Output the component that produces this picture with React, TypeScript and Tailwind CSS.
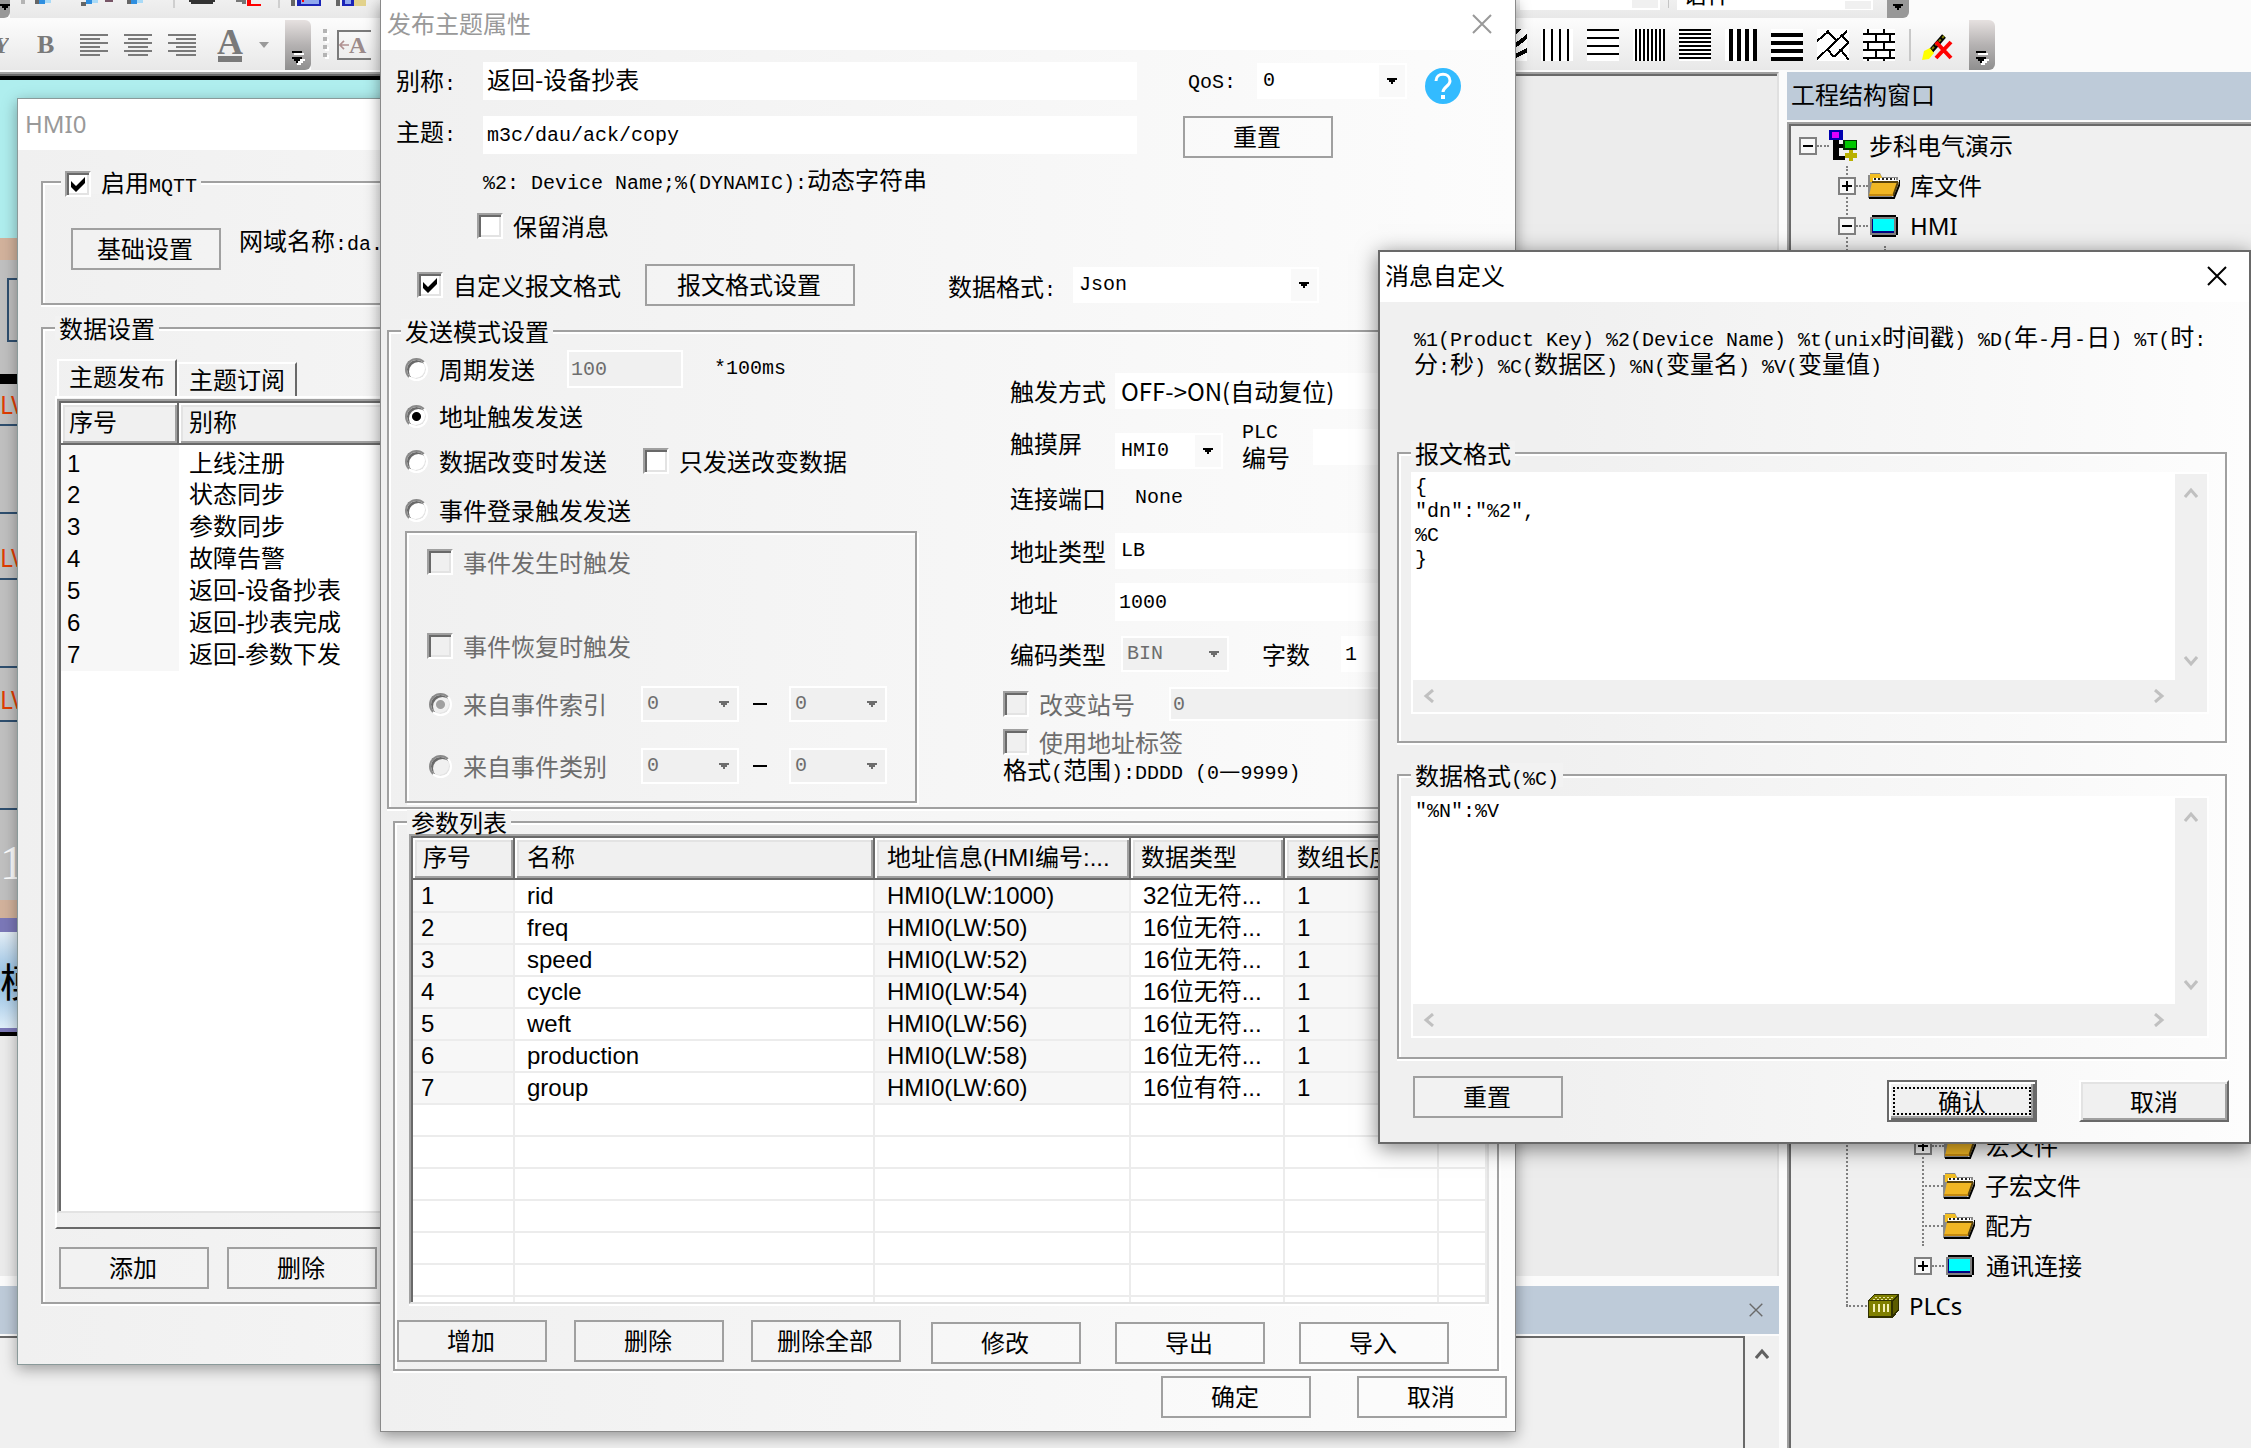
import { useState } from 'react';
import type { ReactNode } from 'react';

const PUBLISH_TOPICS = [
  '上线注册',
  '状态同步',
  '参数同步',
  '故障告警',
  '返回-设备抄表',
  '返回-抄表完成',
  '返回-参数下发',
];

const PARAMS = [
  { name: 'rid', address: 'HMI0(LW:1000)', type: '32位无符...', length: 1 },
  { name: 'freq', address: 'HMI0(LW:50)', type: '16位无符...', length: 1 },
  { name: 'speed', address: 'HMI0(LW:52)', type: '16位无符...', length: 1 },
  { name: 'cycle', address: 'HMI0(LW:54)', type: '16位无符...', length: 1 },
  { name: 'weft', address: 'HMI0(LW:56)', type: '16位无符...', length: 1 },
  { name: 'production', address: 'HMI0(LW:58)', type: '16位无符...', length: 1 },
  { name: 'group', address: 'HMI0(LW:60)', type: '16位有符...', length: 1 },
];

const EMPTY_ROWS = [0, 1, 2, 3, 4, 5, 6];

const monoFont = 'font-["Liberation_Mono","Noto_Sans_CJK_SC",monospace] text-[20px]';
const uiFont = 'font-["Noto_Sans","Noto_Sans_CJK_SC",sans-serif]';
const listFont = 'font-["Liberation_Sans","Noto_Sans_CJK_SC",sans-serif]';

// Latin runs are set in the fixed-width face, Chinese runs keep the full size
function Mix({ text }: { text: string }) {
  const parts = text.match(/[\u3400-\u9fff—]+|[^\u3400-\u9fff—]+/g) || [];
  return (
    <>
      {parts.map((part, i) =>
        /[\u3400-\u9fff—]/.test(part) ? (
          <span key={i}>{part}</span>
        ) : (
          <span key={i} className={`leading-none whitespace-pre-wrap ${monoFont}`}>{part}</span>
        )
      )}
    </>
  );
}

function Check({ label, defaultChecked, disabled }: { label: string; defaultChecked?: boolean; disabled?: boolean }) {
  return (
    <label className={`flex shrink-0 items-center gap-[10px] whitespace-nowrap ${disabled ? 'text-[#6d6d6d]' : ''}`}>
      <span className="relative block size-[26px]">
        <input
          type="checkbox"
          defaultChecked={defaultChecked}
          disabled={disabled}
          className="peer block size-[26px] appearance-none border-2 border-t-[#a0a0a0] border-l-[#a0a0a0] border-r-white border-b-white bg-white shadow-[inset_2px_2px_0_#696969,inset_-2px_-2px_0_#e3e3e3] disabled:bg-[#f0f0f0]"
        />
        <svg viewBox="0 0 26 26" className="pointer-events-none absolute inset-0 hidden peer-checked:block">
          <path d="M6 10v6l5 5 9-9V6l-9 9z" fill="#000" />
        </svg>
      </span>
      <span><Mix text={label} /></span>
    </label>
  );
}

function Radio({ label, name, defaultChecked, disabled }: { label: string; name: string; defaultChecked?: boolean; disabled?: boolean }) {
  return (
    <label className={`flex shrink-0 items-center gap-[11px] whitespace-nowrap ${disabled ? 'text-[#6d6d6d]' : ''}`}>
      <input
        type="radio"
        name={name}
        defaultChecked={defaultChecked}
        disabled={disabled}
        className="block size-[23px] appearance-none rounded-full border-2 border-t-[#8a8a8a] border-l-[#8a8a8a] border-r-white border-b-white bg-white shadow-[inset_2px_2px_0_#696969,inset_-1px_-1px_0_#e3e3e3] checked:bg-[radial-gradient(circle,#000_4px,#fff_5px)] disabled:bg-[#f0f0f0] disabled:checked:bg-[radial-gradient(circle,#a0a0a0_4px,#f0f0f0_5px)]"
      />
      <span>{label}</span>
    </label>
  );
}

function Button({ children, wide }: { children: ReactNode; wide?: boolean }) {
  return (
    <button
      type="button"
      className={`h-[42px] shrink-0 border-2 border-[#a0a0a0] bg-white/10 pr-[2px] pb-[3px] text-center active:bg-[#e5e5e5] ${wide ? 'w-[210px]' : 'w-[150px]'}`}
    >
      {children}
    </button>
  );
}

function Select({ label, value, className, disabled, plain }: { label: string; value: string; className: string; disabled?: boolean; plain?: boolean }) {
  return (
    <div className={`relative h-9 shrink-0 ${className}`}>
      <select
        aria-label={label}
        disabled={disabled}
        className={`size-full appearance-none border-2 border-white px-1 leading-7 opacity-100 ${plain ? '' : monoFont} ${disabled ? 'bg-[#f0f0f0] text-[#6d6d6d]' : 'bg-white'}`}
      >
        <option>{value}</option>
      </select>
      <span className={`pointer-events-none absolute inset-y-[2px] right-[2px] flex w-[26px] items-center justify-center ${disabled ? '' : 'bg-[#f9f9f9]'}`}>
        <svg viewBox="0 0 10 6" className="h-[6px] w-[10px]" shapeRendering="crispEdges">
          <path d="M0 0h10v2h-2v2h-2v2h-2v-2h-2v-2h-2z" fill={disabled ? '#6d6d6d' : '#000'} />
        </svg>
      </span>
    </div>
  );
}

function GroupBox({ legend, legendClass = 'ml-3', className, children }: { legend: ReactNode; legendClass?: string; className: string; children: ReactNode }) {
  return (
    <fieldset className={`min-w-0 border-2 border-[#a0a0a0] shadow-[inset_2px_2px_0_#fff,0_2px_0_#fff,2px_2px_0_#fff] ${className}`}>
      <legend className={`h-6 bg-[#f2f2f2] px-1 whitespace-nowrap ${legendClass}`}>{legend}</legend>
      {children}
    </fieldset>
  );
}

function CloseIcon({ className }: { className: string }) {
  return (
    <svg viewBox="0 0 20 20" className={className} fill="none" stroke="currentColor" strokeWidth="2">
      <path d="M1 1l18 18M19 1L1 19" />
    </svg>
  );
}

function Chevron({ className }: { className: string }) {
  return (
    <svg viewBox="0 0 14 12" className={`h-3 w-[14px] ${className}`} fill="none" stroke="currentColor" strokeWidth="3">
      <path d="M1 10l6-7 6 7" />
    </svg>
  );
}

/* ---------- toolbars ---------- */

function AlignIcon({ kind }: { kind: 'left' | 'center' | 'right' }) {
  const shift = kind === 'left' ? 0 : kind === 'center' ? 4 : 8;
  return (
    <svg viewBox="0 0 28 22" className="h-[22px] w-7" fill="#7a7a7a" shapeRendering="crispEdges">
      {[0, 8, 16].map((y) => (
        <rect key={y} x="0" y={y} width="28" height="2" />
      ))}
      {[4, 12, 20].map((y) => (
        <rect key={y} x={shift} y={y} width="20" height="2" />
      ))}
    </svg>
  );
}

function Overflow() {
  return (
    <button type="button" aria-label="工具栏选项" className="flex h-[50px] w-[26px] shrink-0 items-end justify-center rounded-r-md bg-linear-to-b from-[#e6e1e0] via-[#b5b2b2] to-[#8f8f8f] pb-[5px]">
      <svg viewBox="0 0 14 16" className="h-4 w-[14px]" shapeRendering="crispEdges">
        <path d="M3 4h10v2H3zM4 10h10v2h-2v2h-2v2H6v-2z" fill="#fff" />
        <path d="M1 2h10v2H1zM1 8h10v2H9v2H7v2H5v-2H3v-2H1z" fill="#000" />
      </svg>
    </button>
  );
}

function StubOverflow({ className }: { className: string }) {
  return (
    <span className={`flex h-[18px] shrink-0 items-start justify-center rounded-br-md bg-[#989898] pt-1 ${className}`}>
      <svg viewBox="0 0 10 6" className="h-[6px] w-[10px]" shapeRendering="crispEdges">
        <path d="M0 0h10v2h-2v2h-2v2h-2v-2h-2v-2h-2z" fill="#000" />
      </svg>
    </span>
  );
}

function Grip({ rows }: { rows: number[] }) {
  return (
    <svg viewBox="0 0 6 32" className="h-8 w-[6px]" shapeRendering="crispEdges">
      {rows.map((y) => (
        <g key={y}>
          <rect x="2" y={y + 2} width="4" height="4" fill="#fff" />
          <rect x="0" y={y} width="4" height="4" fill="#b4b4b4" />
        </g>
      ))}
    </svg>
  );
}

const PATTERNS = [
  <path key="p" d="M-2 12L12 0M-2 24L26 -2M-2 34L34 6M8 34L34 20" stroke="#000" strokeWidth="4" />,
  <path key="p" d="M3 0v32M11 0v32M19 0v32M27 0v32" stroke="#000" strokeWidth="2" />,
  <path key="p" d="M0 1h32M0 9h32M0 17h32M0 25h32" stroke="#000" strokeWidth="2" />,
  <path key="p" d="M3 0v32M7 0v32M11 0v32M15 0v32M19 0v32M23 0v32M27 0v32M31 0v32" stroke="#000" strokeWidth="2" />,
  <path key="p" d="M0 1h32M0 5h32M0 9h32M0 13h32M0 17h32M0 21h32M0 25h32M0 29h32" stroke="#000" strokeWidth="2" />,
  <path key="p" d="M6 0v32M14 0v32M22 0v32M30 0v32" stroke="#000" strokeWidth="4" />,
  <path key="p" d="M0 6h32M0 14h32M0 22h32M0 30h32" stroke="#000" strokeWidth="4" />,
  <path key="p" d="M0 12L12 2M0 30L30 2M17 28L32 13M10 2L20 12M24 6L32 14M10 20L17 28M23 20L32 31" stroke="#000" strokeWidth="2" />,
  <path key="p" d="M0 5h32M0 13h32M0 21h32M0 29h32M5 0v5M21 0v5M13 5v8M27 5v8M5 13v8M21 13v8M13 21v8M27 21v8M5 29v3M21 29v3" stroke="#000" strokeWidth="2" />,
];

function Toolbars() {
  return (
    <header className="flex h-[72px] shrink-0 flex-col gap-[2px] overflow-hidden bg-[#fbfbfb]">
      <div className="flex h-[18px]">
        <StubOverflow className="w-[10px]" />
        <div className="flex h-[18px] w-[1877px] shrink-0 items-start bg-linear-to-b from-[#f0f0f0] to-[#e8e8e8] pl-[11px]">
          <svg viewBox="0 0 350 8" className="h-2 w-[350px]" shapeRendering="crispEdges">
            <path d="M0 0h4v4h-4z" fill="#b4b4b4" />
            <path d="M14 0h4v4h-4zM60 2h5v4h-5zM106 0h4v4h-4z" fill="#666" />
            <path d="M18 0h6v4h-6zM65 0h6v4h-6zM110 0h6v4h-6z" fill="#2f8fe0" />
            <path d="M24 0h6v3h-6zM71 0h6v3h-6zM116 0h6v3h-6z" fill="#a9daf7" />
            <path d="M84 0h8v2h-8z" fill="#775566" />
            <path d="M152 0h2v8h-2zM257 0h2v8h-2z" fill="#cfcfcf" />
            <path d="M168 0h26v2h-2v2h-22v-2h-2z" fill="#333" />
            <path d="M215 0h10v4h-4v-2h-6z" fill="#777" />
            <path d="M226 0h4v4h10v2h-14z" fill="#f00" />
            <path d="M270 0h4v6h-4zM315 0h4v6h-4z" fill="#666" />
            <path d="M276 0h24v6h-24zM321 0h12v6h-12z" fill="#1a24b8" />
            <path d="M280 0h18v4h-18zM324 0h6v4h-6z" fill="#8fa8ee" />
            <path d="M281 0h2v2h-2z" fill="#f00" />
            <path d="M333 0h12v6h-12z" fill="#e2d28c" />
          </svg>
          <div className="ml-[1149px] flex h-[10px] w-[140px] justify-end bg-white pr-[2px]">
            <span className="block h-2 w-[26px] bg-[#f0f0f0]" />
          </div>
          <span className="mx-2 block h-2 w-px bg-[#c4c4c4]" />
          <div className="flex h-[10px] w-[196px] items-end justify-between overflow-hidden bg-white pr-[2px] pb-[5px] pl-[6px]">
            <span>语件</span>
            <span className="mb-[-4px] block h-2 w-[26px] bg-[#f0f0f0]" />
          </div>
        </div>
        <StubOverflow className="w-[22px]" />
      </div>

      <div className="flex h-[50px]">
        <div className="flex w-[285px] shrink-0 items-center bg-linear-to-b from-[#fcfcfc] to-[#e8e8e8] font-['Liberation_Serif',serif] font-bold text-[#7a7a7a]">
          <span className="flex w-[9px] justify-end overflow-hidden italic">Y</span>
          <span className="ml-7 w-[18px] text-[26px]">B</span>
          <span className="ml-[25px] flex gap-4">
            <AlignIcon kind="left" />
            <AlignIcon kind="center" />
            <AlignIcon kind="right" />
          </span>
          <span className="ml-[21px] flex w-[26px] flex-col items-center">
            <span className="h-[27px] text-[36px] leading-[26px]">A</span>
            <span className="block h-[6px] w-6 bg-[#7a7a7a]" />
          </span>
          <svg viewBox="0 0 10 6" className="ml-4 h-[6px] w-[10px]">
            <path d="M0 0h10L5 6z" fill="#9a9a9a" />
          </svg>
        </div>
        <Overflow />
        <div className="flex w-[1184px] shrink-0 items-center gap-2 bg-linear-to-b from-[#fcfcfc] to-[#e8e8e8] pl-3">
          <Grip rows={[0, 8, 16, 24]} />
          <span className="flex h-[30px] w-[34px] items-center border-y-2 border-l-2 border-[#7a7a7a] font-['Liberation_Serif',serif] font-bold text-[#9a8a8a]">
            <svg viewBox="0 0 12 12" className="h-3 w-[10px] shrink-0" fill="none" stroke="#b09090" strokeWidth="2">
              <path d="M12 6H2M6 1L1 6l5 5" />
            </svg>
            A
          </span>
        </div>
        <div className="flex shrink-0 items-center gap-[14px] bg-linear-to-b from-[#fcfcfc] to-[#e8e8e8]">
          {PATTERNS.map((pattern, i) => (
            <svg key={i} viewBox="0 0 32 32" className="size-8 bg-white" fill="none" shapeRendering="crispEdges">
              {pattern}
            </svg>
          ))}
          <span className="h-8 w-[2px] bg-[#c8c8c8]" />
          <svg viewBox="0 0 32 32" className="ml-[-4px] size-8" fill="none">
            <path d="M10 22L23 7" stroke="#000" strokeWidth="5" />
            <path d="M11 20L23 7" stroke="#808000" strokeWidth="2" strokeDasharray="3 2" />
            <path d="M1 31l2-9 6-3 4 5-5 6z" fill="#ff0" />
            <path d="M15 13l15 16M30 13L15 29" stroke="#f00" strokeWidth="4" />
          </svg>
          <span className="w-[2px]" />
        </div>
        <Overflow />
      </div>
    </header>
  );
}

/* ---------- main window behind the dialogs ---------- */

function Canvas() {
  return (
    <div className="flex h-[1204px] flex-col overflow-hidden border-t-2 border-r-2 border-t-[#a0a0a0] border-r-[#e0e0e0] bg-[#ececec]">
      <div className="h-[2px] shrink-0 bg-[#696969]" />
      <div className="flex w-[380px] flex-col text-[#e03c00]">
        <div className="h-1 bg-black" />
        <div className="h-[158px] bg-[#afeeee]" />
        <div className="h-[22px] bg-[#d2b29c]" />
        <div className="h-[114px] bg-[#c0c0c0] pt-[18px] pl-[7px]">
          <div className="h-16 border-2 border-[#2f4f6f]" />
        </div>
        <div className="h-[10px] bg-black" />
        <div className="flex h-[42px] items-center border-b-2 border-[#2f4f6f] bg-[#c0c0c0]">LV</div>
        <div className="h-[88px] border-b-2 border-[#2f4f6f] bg-[#c0c0c0]" />
        <div className="flex h-[66px] items-end border-b-2 border-[#2f4f6f] bg-[#c0c0c0] pb-[9px]">LV</div>
        <div className="h-[88px] border-b-2 border-[#2f4f6f] bg-[#c0c0c0]" />
        <div className="flex h-[54px] items-end border-b-2 border-[#2f4f6f] bg-[#c0c0c0] pb-[9px]">LV</div>
        <div className="h-[88px] border-b-2 border-[#2f4f6f] bg-[#c0c0c0]" />
        <div className="flex h-[90px] items-center bg-[#c0c0c0] pt-4 font-['Liberation_Serif',serif] text-[48px] text-white">1</div>
        <div className="h-[18px] bg-[#d2b29c]" />
        <div className="h-[14px] bg-[#7b78b8]" />
        <div className="flex h-24 items-center bg-linear-to-b from-[#e4eef6] via-[#8dbbe0] to-[#e0effa] text-[40px] text-black">模</div>
        <div className="h-1 bg-[#7b78b8]" />
        <div className="h-1 bg-black" />
      </div>
    </div>
  );
}

function OutputPanel() {
  return (
    <section className="mt-[10px] flex flex-1 flex-col">
      <div className="flex h-12 items-center justify-end bg-[#becbd9] pr-4 text-[#6a6a6a]">
        <button type="button" aria-label="关闭输出窗口">
          <CloseIcon className="size-[14px]" />
        </button>
      </div>
      <div className="mt-[2px] flex flex-1 bg-[#f0f0f0]">
        <div className="flex-1 border-t-2 border-r-2 border-[#696969]" />
        <div className="ml-[2px] w-8 pt-3 pl-2 text-[#606060]">
          <Chevron className="" />
        </div>
      </div>
    </section>
  );
}

function FolderIcon() {
  return (
    <svg viewBox="0 0 32 26" className="h-[26px] w-8 shrink-0">
      <path d="M0 2h2V0h10l2 4h16v3h-2l-4 18H0z" fill="#8a8a8a" />
      <path d="M2 1h10l2 4v4H2z" fill="#f2be22" />
      <path d="M5 5h23v5H5z" fill="#fff" />
      <path d="M6 6h21" stroke="#222" strokeWidth="2" strokeDasharray="2 2" />
      <path d="M4 9h26l-5 14H1z" fill="#f0b624" />
      <path d="M4 9h26M25 23l5-14" stroke="#5a430a" strokeWidth="2" fill="none" />
      <path d="M1 22h24" stroke="#c58a10" strokeWidth="2" />
      <path d="M1 25h25l6-15V7" stroke="#000" strokeWidth="2" fill="none" />
    </svg>
  );
}

function ScreenIcon() {
  return (
    <svg viewBox="0 0 32 26" className="h-[26px] w-8 shrink-0" shapeRendering="crispEdges">
      <path d="M4 2h24v2h2v18h-2v2H4v-2H2V4h2z" fill="#000" />
      <path d="M2 4h26v18H2z" fill="#808080" />
      <path d="M4 6h22v14H4z" fill="#000080" />
      <path d="M5 6h21v12H5z" fill="#0ff" />
    </svg>
  );
}

function ProjectIcon() {
  return (
    <svg viewBox="0 0 30 32" className="h-8 w-[30px] shrink-0" shapeRendering="crispEdges">
      <path d="M4 10h6v4h6v4h-6v8h6v4H4z" fill="#000" />
      <path d="M0 0h14v10H0z" fill="#0000b0" />
      <path d="M3 2h7v6H3z" fill="#e000ff" />
      <path d="M14 10h14v10H14z" fill="#003000" />
      <path d="M16 11h11v7H16z" fill="#00c800" />
      <path d="M20 20h4v3h4v5h-4v3h-4v-3h-4v-5h4z" fill="#b8b000" />
    </svg>
  );
}

function PlcIcon() {
  return (
    <svg viewBox="0 0 32 26" className="h-[26px] w-8 shrink-0" shapeRendering="crispEdges">
      <path d="M8 1h24v16l-6 8H1V7z" fill="#303000" />
      <path d="M8 2h22l-5 5H2z" fill="#808000" />
      <path d="M2 8h22v15H2z" fill="#808000" />
      <path d="M26 8l5-5v13l-5 6z" fill="#5c5c00" />
      <path d="M8 4h18M6 6h18" stroke="#e8e0a0" strokeWidth="1" strokeDasharray="2 2" />
      <path d="M7 11v8M12 11v8M17 11v8M21 11v8" stroke="#f4f0b8" strokeWidth="2" />
    </svg>
  );
}

function TreeRow({ icon, label, expand, className }: { icon: ReactNode; label: string; expand?: '+' | '-'; className: string }) {
  return (
    <li className={`flex h-10 items-center ${className}`}>
      {expand && (
        <button type="button" aria-label={`${label} ${expand}`} className="h-[18px] w-[18px] shrink-0 border-2 border-[#808080] bg-[#f8f8f8]">
          <svg viewBox="0 0 14 14" className="block size-[14px]" shapeRendering="crispEdges">
            <path d={expand === '+' ? 'M2 6h10v2H2zM6 2h2v10H6z' : 'M2 6h10v2H2z'} fill="#000" />
          </svg>
        </button>
      )}
      <span className={`shrink-0 border-t-2 border-dotted border-[#808080] ${expand ? 'w-3' : 'w-[21px]'}`} />
      {icon}
      <span className="ml-[10px]">{label}</span>
    </li>
  );
}

function ProjectTree() {
  return (
    <aside className={`flex min-w-0 flex-1 flex-col ${uiFont}`}>
      <h2 className="flex h-12 items-center bg-[#becbd9] pb-[2px] pl-1">工程结构窗口</h2>
      <div className="mt-[2px] flex-1 border-t-2 border-l-2 border-[#a0a0a0] bg-[#f0f0f0] shadow-[inset_2px_2px_0_#696969]">
        <ul className="pt-[2px] pl-[10px]">
          <TreeRow icon={<ProjectIcon />} label="步科电气演示" expand="-" className="" />
          <li className="ml-[47px]">
            <ul className="border-l-2 border-dotted border-[#808080] pb-5">
              <TreeRow icon={<FolderIcon />} label="库文件" expand="+" className="ml-[-10px]" />
              <TreeRow icon={<ScreenIcon />} label="HMI" expand="-" className="ml-[-10px]" />
              <li className="h-[880px] pl-9">
                <span className="block h-full border-l-2 border-dotted border-[#808080]" />
              </li>
              <li className="ml-[74px]">
                <ul className="border-l-2 border-dotted border-[#808080]">
                  <TreeRow icon={<FolderIcon />} label="宏文件" expand="+" className="ml-[-10px]" />
                  <TreeRow icon={<FolderIcon />} label="子宏文件" className="ml-[-2px]" />
                  <TreeRow icon={<FolderIcon />} label="配方" className="ml-[-2px]" />
                </ul>
                <TreeRow icon={<ScreenIcon />} label="通讯连接" expand="+" className="ml-[-8px]" />
              </li>
            </ul>
            <TreeRow icon={<PlcIcon />} label="PLCs" className="mt-[-20px]" />
          </li>
        </ul>
      </div>
    </aside>
  );
}

/* ---------- HMI0 window ---------- */

const headCell =
  'h-[42px] border-r-2 border-b-2 border-r-[#696969] border-b-[#696969] bg-[#f0f0f0] text-left font-normal shadow-[inset_2px_2px_0_#fff,inset_-2px_-2px_0_#a0a0a0,inset_4px_4px_0_#e3e3e3]';

function HmiWindow() {
  const [tab, setTab] = useState(0);

  return (
    <section className="absolute top-[98px] left-[17px] w-[1137px] border border-[#8a9a9a] bg-linear-to-r from-[#f0f0f0] to-[#fcfcfc] pb-[60px] shadow-[0_4px_14px_rgba(0,0,0,0.35)]">
      <h1 className={`flex h-[51px] items-center bg-white pb-[2px] pl-[7px] text-[#999] ${uiFont}`}>HMI0</h1>
      <GroupBox
        legend={<Check label="启用MQTT" defaultChecked />}
        legendClass="ml-[18px]"
        className="mt-5 ml-[23px] h-[135px]"
      >
        <div className="mt-[34px] ml-7 flex">
          <Button>基础设置</Button>
          <span className="ml-[18px]"><Mix text="网域名称:da.cloud" /></span>
        </div>
      </GroupBox>
      <GroupBox legend="数据设置" className="mt-[11px] ml-[23px] h-[988px]">
        <div role="tablist" className="mt-[19px] ml-[14px] flex h-[37px] items-end">
          {['主题发布', '主题订阅'].map((name, i) => (
            <button
              key={name}
              type="button"
              role="tab"
              aria-selected={tab === i}
              onClick={() => setTab(i)}
              className={`border-t-2 border-r-2 border-l-2 border-t-white border-r-[#696969] border-l-white px-[10px] ${tab === i ? 'h-[37px] pb-[6px]' : 'h-[34px] pb-[2px]'}`}
            >
              {name}
            </button>
          ))}
        </div>
        <div className="ml-3 border-b-2 border-l-2 border-b-[#696969] border-l-white pt-[3px] pb-[14px] shadow-[inset_0_2px_0_#fff]">
          <div className={`h-[814px] border-2 border-t-[#a0a0a0] border-r-[#e3e3e3] border-b-[#e3e3e3] border-l-[#a0a0a0] bg-white shadow-[inset_2px_2px_0_#696969] ${listFont}`}>
            <table className="w-full table-fixed border-separate border-spacing-0 pt-[2px] pl-[2px]">
              <thead>
                <tr>
                  <th className={`w-[118px] pl-2 ${headCell}`}>序号</th>
                  <th className={`pl-[10px] ${headCell}`}>别称</th>
                </tr>
              </thead>
              <tbody>
                {PUBLISH_TOPICS.map((topic, i) => (
                  <tr key={topic}>
                    <td className={`bg-[#f7f7f7] pl-[6px] ${i === 0 ? 'h-[34px] pt-1' : 'h-8'}`}>{i + 1}</td>
                    <td className={`pl-[10px] ${i === 0 ? 'pt-1' : ''}`}>{topic}</td>
                  </tr>
                ))}
              </tbody>
            </table>
          </div>
        </div>
        <div className="mt-[18px] ml-4 flex gap-[18px]">
          <Button>添加</Button>
          <Button>删除</Button>
        </div>
      </GroupBox>
    </section>
  );
}

/* ---------- publish topic dialog ---------- */

const textBox = 'min-w-0 border-2 border-white bg-white px-[2px] outline-none disabled:bg-[#f0f0f0] disabled:text-[#6d6d6d]';

function EventRange({ label, checked }: { label: string; checked?: boolean }) {
  return (
    <div className="flex h-9 items-center pl-[22px]">
      <div className="w-[212px]">
        <Radio name="eventSource" label={label} defaultChecked={checked} disabled />
      </div>
      <Select label={`${label}起始`} value="0" className="w-[98px]" disabled />
      <span className="mx-[14px] h-[2px] w-[14px] bg-black" />
      <Select label={`${label}结束`} value="0" className="ml-2 w-[98px]" disabled />
    </div>
  );
}

function SendMode() {
  return (
    <GroupBox legend="发送模式设置" className="mt-[13px] mr-4 ml-[6px] flex-none pb-1">
      <div className="flex">
        <div className="ml-4 w-[512px]">
          <div className="mt-[7px] flex h-[38px] items-center">
            <Radio name="sendMode" label="周期发送" />
            <input type="text" aria-label="周期" defaultValue="100" disabled className={`ml-8 h-[38px] w-[116px] ${monoFont} ${textBox}`} />
            <span className={`ml-[31px] ${monoFont}`}>*100ms</span>
          </div>
          <div className="mt-4 flex">
            <Radio name="sendMode" label="地址触发发送" defaultChecked />
          </div>
          <div className="mt-[21px] flex h-6 items-center gap-9">
            <Radio name="sendMode" label="数据改变时发送" />
            <Check label="只发送改变数据" />
          </div>
          <div className="mt-[25px] flex">
            <Radio name="sendMode" label="事件登录触发发送" />
          </div>
          <div className="mt-[9px] h-[272px] border-2 border-[#a0a0a0] pt-4 shadow-[inset_2px_2px_0_#fff,2px_2px_0_#fff]">
            <div className="pl-5">
              <Check label="事件发生时触发" disabled />
            </div>
            <div className="mt-[58px] pl-5">
              <Check label="事件恢复时触发" disabled />
            </div>
            <div className="mt-[27px]">
              <EventRange label="来自事件索引" checked />
            </div>
            <div className="mt-[26px]">
              <EventRange label="来自事件类别" />
            </div>
          </div>
        </div>

        <div className="ml-[86px] w-[483px]">
          <div className="mt-[30px] flex h-9 items-center pl-[7px]">
            <span className="w-[105px]">触发方式</span>
            <Select label="触发方式" value="OFF->ON(自动复位)" className="w-[371px]" plain />
          </div>
          <div className="mt-5 flex h-10 items-end pl-[7px]">
            <span className="w-[105px] self-start pt-[2px]">触摸屏</span>
            <Select label="触摸屏" value="HMI0" className="w-[108px]" />
            <span className="ml-[19px] flex w-[71px] flex-col">
              <span className={monoFont}>PLC</span>
              <span>编号</span>
            </span>
            <input type="text" aria-label="PLC 编号" className={`h-9 w-[170px] self-start ${textBox}`} />
          </div>
          <div className="mt-[17px] flex h-6 items-center pl-[7px]">
            <span className="w-[125px]">连接端口</span>
            <span className={monoFont}>None</span>
          </div>
          <div className="mt-[23px] flex h-9 items-center pl-[7px]">
            <span className="w-[105px]">地址类型</span>
            <Select label="地址类型" value="LB" className="w-[371px]" />
          </div>
          <div className="mt-[14px] flex h-[38px] items-center pl-[7px]">
            <label htmlFor="addr" className="w-[105px]">地址</label>
            <input id="addr" type="text" defaultValue="1000" className={`h-[38px] flex-1 ${monoFont} ${textBox}`} />
          </div>
          <div className="mt-[14px] flex h-[38px] items-center pl-[7px]">
            <span className="w-[111px]">编码类型</span>
            <Select label="编码类型" value="BIN" className="w-[108px]" disabled />
            <label htmlFor="words" className="ml-[33px] w-[79px]">字数</label>
            <input id="words" type="text" defaultValue="1" className={`h-9 flex-1 ${monoFont} ${textBox}`} />
          </div>
          <div className="mt-[14px] flex h-[34px] items-center">
            <div className="w-[166px]">
              <Check label="改变站号" disabled />
            </div>
            <input type="text" aria-label="站号" defaultValue="0" disabled className={`h-[34px] flex-1 ${monoFont} ${textBox}`} />
          </div>
          <div className="mt-2">
            <Check label="使用地址标签" disabled />
          </div>
          <p className="mt-[2px] whitespace-nowrap"><Mix text="格式(范围):DDDD (0—9999)" /></p>
        </div>
      </div>
    </GroupBox>
  );
}

function ParamTable() {
  return (
    <div className={`ml-[14px] h-[470px] w-[1080px] overflow-hidden border-2 border-t-[#a0a0a0] border-r-[#e3e3e3] border-b-[#e3e3e3] border-l-[#a0a0a0] bg-white shadow-[0_2px_0_#fff,inset_2px_2px_0_#696969] ${listFont}`}>
      <table className="w-full table-fixed border-separate border-spacing-0 pt-[2px] pl-[2px]">
        <thead>
          <tr>
            <th className={`w-[102px] pl-[10px] ${headCell}`}>序号</th>
            <th className={`w-[360px] pl-3 ${headCell}`}>名称</th>
            <th className={`w-[256px] pl-3 ${headCell}`}>地址信息(HMI编号:...</th>
            <th className={`w-[154px] pl-[10px] ${headCell}`}>数据类型</th>
            <th className={`w-[154px] pl-3 whitespace-nowrap ${headCell}`}>数组长度</th>
            <th className={headCell} />
          </tr>
        </thead>
        <tbody className="[&_td]:h-8 [&_td]:border-r-2 [&_td]:border-b-2 [&_td]:border-[#ececec] [&_td]:pl-3 [&_tr:first-child_td]:h-[33px]">
          {PARAMS.map((p, i) => (
            <tr key={p.name}>
              <td className="bg-[#f7f7f7]"><span className="ml-[-4px]">{i + 1}</span></td>
              <td>{p.name}</td>
              <td className="bg-[#f7f7f7]">{p.address}</td>
              <td className="whitespace-nowrap">{p.type}</td>
              <td className="bg-[#f7f7f7]">{p.length}</td>
              <td />
            </tr>
          ))}
          {EMPTY_ROWS.map((n) => (
            <tr key={n}>
              <td />
              <td />
              <td />
              <td />
              <td />
              <td />
            </tr>
          ))}
        </tbody>
      </table>
    </div>
  );
}

function PublishDialog() {
  return (
    <section role="dialog" aria-label="发布主题属性" className="absolute top-0 left-[380px] w-[1136px] border-x border-b border-[#8a8a8a] bg-linear-to-r from-[#f0f0f0] to-[#fcfcfc] pb-[13px] shadow-[0_4px_14px_rgba(0,0,0,0.4)]">
      <div className={`flex h-[50px] items-center justify-between bg-white pr-[23px] pb-[2px] pl-[6px] text-[#999] ${uiFont}`}>
        <h1>发布主题属性</h1>
        <button type="button" aria-label="关闭">
          <CloseIcon className="size-5" />
        </button>
      </div>

      <div className="mt-3 flex h-[38px] items-center pl-[15px]">
        <label htmlFor="alias" className="w-[87px]"><Mix text="别称:" /></label>
        <input id="alias" type="text" defaultValue="返回-设备抄表" className={`h-[38px] w-[654px] pb-[6px] ${textBox}`} />
        <span className={`ml-[51px] w-[69px] pt-1 ${monoFont}`}>QoS:</span>
        <Select label="QoS" value="0" className="w-[150px]" />
        <button type="button" aria-label="帮助" className="mt-[10px] ml-[18px] size-9">
          <svg viewBox="0 0 36 36" className="size-9">
            <circle cx="18" cy="18" r="18" fill="#33bbff" />
            <path d="M11 13c0-9 14-9 14 0 0 5-7 6-7 11" fill="none" stroke="#fff" strokeWidth="3" />
            <rect x="16" y="27" width="4" height="4" fill="#fff" />
          </svg>
        </button>
      </div>
      <div className="mt-4 flex h-[42px] items-start pl-[15px]">
        <label htmlFor="topic" className="w-[87px] pt-[3px]"><Mix text="主题:" /></label>
        <input id="topic" type="text" defaultValue="m3c/dau/ack/copy" className={`h-[38px] w-[654px] ${monoFont} ${textBox}`} />
        <div className="ml-[46px]">
          <Button>重置</Button>
        </div>
      </div>
      <p className="mt-[9px] pl-[102px]"><Mix text="%2: Device Name;%(DYNAMIC):动态字符串" /></p>
      <div className="mt-[19px] flex pl-24">
        <Check label="保留消息" />
      </div>
      <div className="mt-[25px] flex h-[42px] items-center pl-9">
        <div className="w-[228px]">
          <Check label="自定义报文格式" defaultChecked />
        </div>
        <Button wide>报文格式设置</Button>
        <span className="ml-[93px] w-[125px] pt-1"><Mix text="数据格式:" /></span>
        <Select label="数据格式" value="Json" className="w-[246px]" />
      </div>

      <SendMode />

      <GroupBox legend="参数列表" className="mt-px mr-4 ml-3 pb-[5px]">
        <ParamTable />
        <div className="mt-4 ml-[2px] flex gap-[30px]">
          <div className="flex gap-[27px]">
            <Button>增加</Button>
            <Button>删除</Button>
            <Button>删除全部</Button>
          </div>
          <div className="flex gap-[34px] pt-[2px]">
            <Button>修改</Button>
            <Button>导出</Button>
            <Button>导入</Button>
          </div>
        </div>
      </GroupBox>

      <div className="mt-[5px] flex justify-end gap-[46px] pr-2">
        <Button>确定</Button>
        <Button>取消</Button>
      </div>
    </section>
  );
}

/* ---------- custom message dialog ---------- */

function ScrollText({ label, value }: { label: string; value: string }) {
  return (
    <div className="ml-3 grid h-[242px] w-[798px] grid-cols-[1fr_32px] grid-rows-[1fr_32px] border-2 border-white bg-[#f0f0f0] text-[#c0c0c0]">
      <textarea
        aria-label={label}
        defaultValue={value}
        wrap="off"
        className={`resize-none overflow-hidden bg-white px-[2px] pt-[2px] leading-6 text-black outline-none ${monoFont}`}
      />
      <div className="flex flex-col items-center justify-between py-[13px]">
        <Chevron className="" />
        <Chevron className="rotate-180" />
      </div>
      <div className="flex items-center justify-between px-[9px]">
        <Chevron className="-rotate-90" />
        <Chevron className="rotate-90" />
      </div>
    </div>
  );
}

function MessageDialog() {
  return (
    <section role="dialog" aria-label="消息自定义" className="absolute top-[250px] right-0 w-[873px] border-2 border-[#696969] bg-linear-to-r from-[#f0f0f0] from-20% to-[#fdfdfd] pb-5 shadow-[0_4px_20px_rgba(0,0,0,0.5)]">
      <div className={`flex h-[50px] items-center justify-between bg-white pr-[22px] pb-[2px] pl-[5px] ${uiFont}`}>
        <h1>消息自定义</h1>
        <button type="button" aria-label="关闭">
          <CloseIcon className="size-5" />
        </button>
      </div>
      <p className="mt-[22px] ml-[34px] h-12 w-[800px] break-all">
        <Mix text="%1(Product Key) %2(Device Name) %t(unix时间戳) %D(年-月-日) %T(时:分:秒) %C(数据区) %N(变量名) %V(变量值)" />
      </p>
      <GroupBox legend="报文格式" className="mt-[69px] mr-[22px] ml-[17px] pt-[7px] pb-[27px]">
        <ScrollText label="报文格式" value={'{\n"dn":"%2",\n%C\n}'} />
      </GroupBox>
      <GroupBox legend={<Mix text="数据格式(%C)" />} className="mt-5 mr-[22px] ml-[17px] pt-[9px] pb-[19px]">
        <ScrollText label="数据格式" value={'"%N":%V'} />
      </GroupBox>
      <div className="mt-[17px] flex h-[46px] items-end pr-5 pl-[33px]">
        <div className="flex-1 self-start">
          <Button>重置</Button>
        </div>
        <button type="button" className="h-[42px] w-[150px] border-2 border-[#696969] bg-[#f0f0f0] p-1 shadow-[inset_2px_2px_0_#fff,inset_-2px_-2px_0_#696969,inset_-4px_-4px_0_#a0a0a0]">
          <span className="block border-2 border-dotted border-black">确认</span>
        </button>
        <button type="button" className="ml-[42px] h-[42px] w-[150px] border-2 border-t-white border-r-[#696969] border-b-[#696969] border-l-white bg-[#f0f0f0] shadow-[inset_2px_2px_0_#e3e3e3,inset_-2px_-2px_0_#a0a0a0]">
          取消
        </button>
      </div>
    </section>
  );
}

export default function App() {
  return (
    <div className="relative flex h-screen flex-col overflow-hidden bg-[#fbfbfb] font-['Noto_Sans_CJK_SC',sans-serif] text-[24px] leading-6 text-black">
      <Toolbars />
      <main className="flex min-h-0 flex-1 gap-2">
        <div className="flex w-[1779px] shrink-0 flex-col">
          <Canvas />
          <OutputPanel />
        </div>
        <ProjectTree />
      </main>
      <HmiWindow />
      <PublishDialog />
      <MessageDialog />
    </div>
  );
}
